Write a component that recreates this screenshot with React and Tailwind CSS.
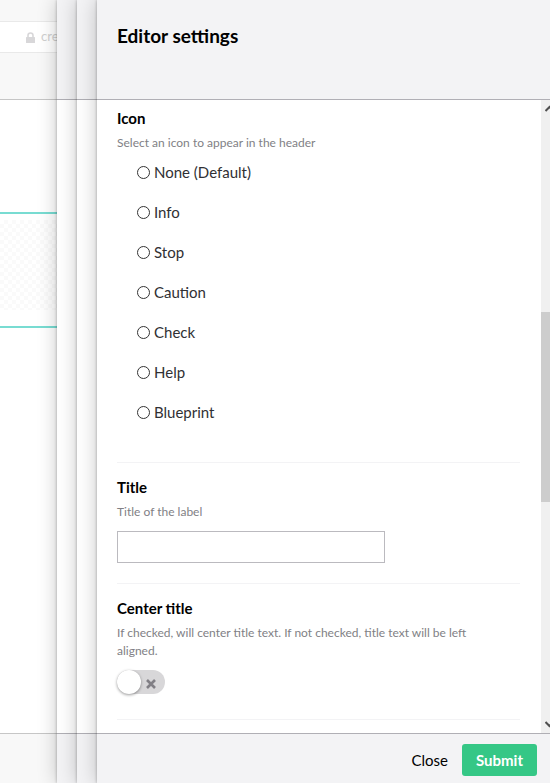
import { useState } from 'react';

const ICONS = ['None (Default)', 'Info', 'Stop', 'Caution', 'Check', 'Help', 'Blueprint'];

const SHADOW = 'shadow-[0_0_20px_rgba(0,0,0,0.22),0_0_3px_rgba(0,0,0,0.3)]';

function Backdrop() {
  return (
    <div className="z-0 flex w-[57px] shrink-0 flex-col overflow-hidden bg-white">
      <div className="h-[100px] shrink-0 border-b border-[#c6c6c6] bg-[#f8f8f8] pt-[21px]">
        <div className="flex h-8 items-center border-y border-[#e9e9e9] bg-white pl-[26px] text-[13px] text-[#d0d0d0]">
          <svg className="mr-[6px] h-[11px] w-[9px] shrink-0" viewBox="0 0 9 11" fill="none" aria-hidden="true">
            <rect y="5" width="9" height="6" rx="0.5" fill="#d8d7d9" />
            <path d="M2 5.5V3.5a2.5 2.5 0 0 1 5 0v2" stroke="#d8d7d9" strokeWidth="1.6" />
          </svg>
          cre
        </div>
      </div>
      <div className="mt-28 border-y-2 border-[#78dcd2] pt-[6px] pb-4">
        <div className="h-[90px] bg-[repeating-conic-gradient(#fafafa_0%_25%,#ffffff_0%_50%)] bg-[length:8px_8px]" />
      </div>
      <div className="mt-auto h-[50px] shrink-0 border-t border-[#c6c6c6] bg-[#f8f8f8]" />
    </div>
  );
}

function StackedPanel({ layer }) {
  return (
    <div className={`flex w-5 shrink-0 flex-col bg-white ${layer} ${SHADOW}`}>
      <div className="h-[100px] border-b border-[#b0afb5] bg-[#f3f3f5]" />
      <div className="flex-1" />
      <div className="h-[50px] border-t border-[#b0afb5] bg-[#f3f3f5]" />
    </div>
  );
}

function Scrollbar() {
  return (
    <div className="flex w-[9px] shrink-0 flex-col overflow-hidden bg-[#f0f0f0]" aria-hidden="true">
      <svg className="mt-[5px] ml-1 h-2 w-[9px] shrink-0" viewBox="0 0 9 8" fill="none">
        <path d="M0.5 6 4.5 2 8.5 6" stroke="#505050" strokeWidth="2" />
      </svg>
      <div className="flex-[199]" />
      <div className="h-[190px] shrink-0 bg-[#cdcdcd]" />
      <div className="flex-[217]" />
      <svg className="mb-[5px] ml-1 h-2 w-[9px] shrink-0" viewBox="0 0 9 8" fill="none">
        <path d="M0.5 2 4.5 6 8.5 2" stroke="#505050" strokeWidth="2" />
      </svg>
    </div>
  );
}

function Help({ children, id }) {
  return (
    <p id={id} className="max-w-[380px] pt-[6px] text-[12px] leading-[18px] text-[#817f85]">
      {children}
    </p>
  );
}

export default function App() {
  const [icon, setIcon] = useState('');
  const [title, setTitle] = useState('');
  const [centered, setCentered] = useState(false);

  return (
    <div className="flex h-screen overflow-hidden bg-white font-['Lato',sans-serif] text-[15px] text-[#303033]">
      <Backdrop />
      <StackedPanel layer="z-10" />
      <StackedPanel layer="z-20" />
      <form
        className={`z-30 flex min-w-0 flex-1 flex-col bg-white ${SHADOW}`}
        onSubmit={(e) => e.preventDefault()}
      >
        <header className="h-[100px] shrink-0 border-b border-[#b0afb5] bg-[#f3f3f5] px-5 pt-6">
          <h1 className="text-[19px] leading-6 font-bold text-black">Editor settings</h1>
        </header>

        <div className="flex min-h-0 flex-1">
          <div className="min-w-0 flex-1 overflow-hidden pr-[21px] pl-5">
            <fieldset className="border-b border-[#f3f3f5] pt-2 pb-[30px]">
              <legend className="float-left w-full leading-5 font-bold text-black">Icon</legend>
              <div className="clear-both">
                <Help>Select an icon to appear in the header</Help>
                <div className="pl-5">
                  {ICONS.map((name) => (
                    <label key={name} className="flex h-10 w-max items-center gap-1">
                      <input
                        type="radio"
                        name="icon"
                        value={name}
                        checked={icon === name}
                        onChange={() => setIcon(name)}
                        className="size-[13px] appearance-none rounded-full border border-[#333333] bg-white checked:border-4"
                      />
                      {name}
                    </label>
                  ))}
                </div>
              </div>
            </fieldset>

            <section className="border-b border-[#f3f3f5] pt-[14px] pb-5">
              <label htmlFor="title" className="block leading-5 font-bold text-black">Title</label>
              <Help id="title-help">Title of the label</Help>
              <input
                id="title"
                type="text"
                aria-describedby="title-help"
                value={title}
                onChange={(e) => setTitle(e.target.value)}
                className="mt-[10px] block h-8 w-[268px] max-w-full border border-[#bbbabf] bg-white px-2 outline-none"
              />
            </section>

            <section className="border-b border-[#f3f3f5] pt-[14px] pb-[25px]">
              <label htmlFor="center-title" className="block leading-5 font-bold text-black">Center title</label>
              <Help id="center-help">
                If checked, will center title text. If not checked, title text will be left aligned.
              </Help>
              <button
                id="center-title"
                type="button"
                role="switch"
                aria-checked={centered}
                aria-describedby="center-help"
                onClick={() => setCentered(!centered)}
                className={`mt-[10px] flex h-6 w-12 items-center rounded-full ${centered ? 'flex-row-reverse bg-[#35c786]' : 'bg-[#d8d7d9]'}`}
              >
                <span className="size-6 rounded-full bg-white shadow-[0_1px_3px_rgba(0,0,0,0.4)]" />
                <svg className="mx-[5px] mt-[3px] size-[10px]" viewBox="0 0 10 10" fill="none" aria-hidden="true">
                  <path d="M1 1l8 8M9 1l-8 8" stroke="#817f85" strokeWidth="2.6" />
                </svg>
              </button>
            </section>
          </div>
          <Scrollbar />
        </div>

        <footer className="flex h-[50px] shrink-0 items-center justify-end gap-[14px] border-t border-[#b0afb5] bg-[#f3f3f5] pt-[3px] pr-[13px]">
          <button type="button" className="h-8 text-black">Close</button>
          <button type="submit" className="h-8 w-[75px] rounded-[3px] bg-[#35c786] font-bold text-white">Submit</button>
        </footer>
      </form>
    </div>
  );
}
